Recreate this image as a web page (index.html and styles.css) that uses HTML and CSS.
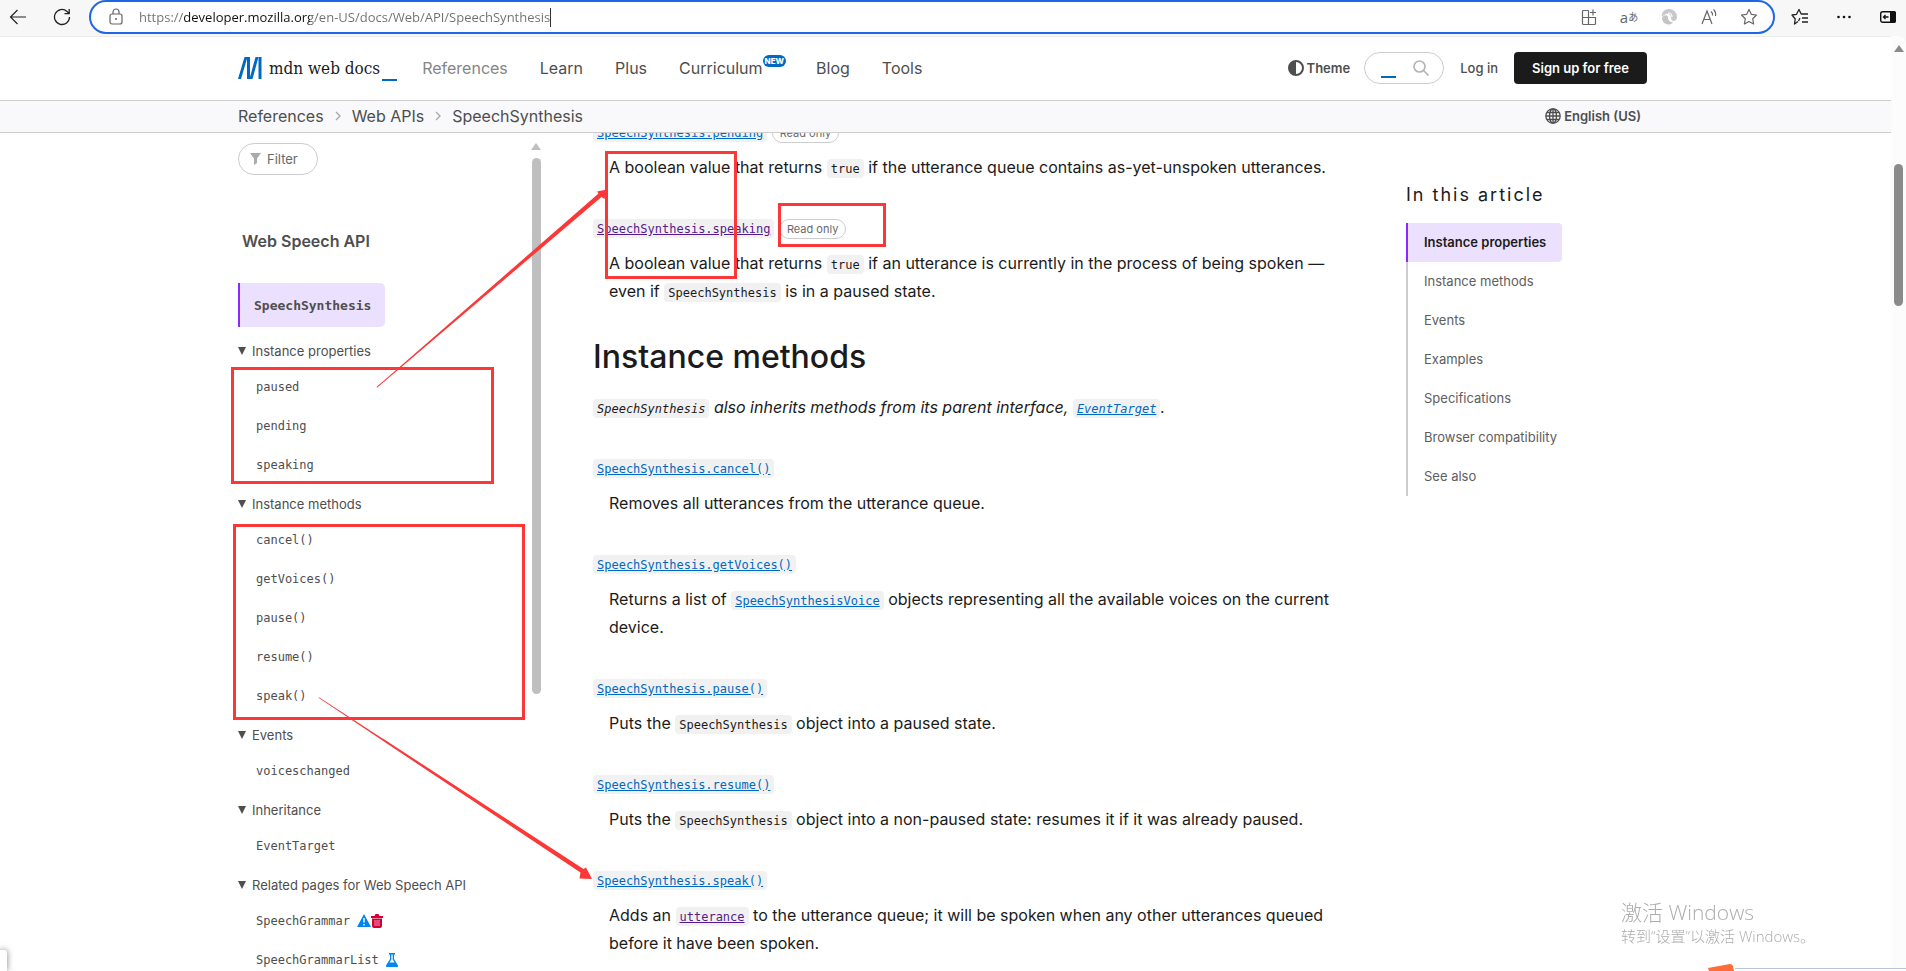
FILE: index.html
```html
<!DOCTYPE html>
<html lang="en-US">
<head>
  <meta charset="UTF-8">
  <meta name="viewport" content="width=device-width, initial-scale=1.0">
  <title>SpeechSynthesis - Web APIs | MDN</title>
  <link rel="stylesheet" href="styles.css">
</head>
<body>

  <!-- Browser toolbar -->
  <div class="toolbar">
    <button class="tool-btn" aria-label="Back">
      <svg width="18" height="18" viewBox="0 0 18 18" fill="none" stroke="#222" stroke-width="1.2"><path d="M17 9H1.500M8.500 2L1.500 9l7 7"/></svg>
    </button>
    <button class="tool-btn" aria-label="Reload">
      <svg width="18" height="18" viewBox="0 0 18 18" fill="none" stroke="#222" stroke-width="1.300"><path d="M16.500 9a7.500 7.500 0 1 1-2.500-5.600L16 5.500M16.200 1v4.700h-4.700"/></svg>
    </button>
    <div class="address">
      <svg width="14" height="18" viewBox="0 0 14 18" fill="none" stroke="#666" stroke-width="1.200"><rect x="1" y="6" width="12" height="10" rx="2"/><path d="M4 6V4a3 3 0 0 1 6 0v2"/><circle cx="7" cy="11" r="1" fill="#666" stroke="none"/></svg>
      <div class="url-field">
        <input class="url" type="text" aria-label="Address" value="https://developer.mozilla.org/en-US/docs/Web/API/SpeechSynthesis">
        <span class="caret"></span>
      </div>
      <div class="address-icons">
        <button class="tool-btn" aria-label="Apps">
          <svg width="18" height="18" viewBox="0 0 18 18" fill="none" stroke="#666" stroke-width="1.200"><path d="M8.500 2.500H3.500a1 1 0 0 0-1 1v12a1 1 0 0 0 1 1h11a1 1 0 0 0 1-1V9.500H2.500M8.500 2.500v14M13 1.500v6M10 4.500h6"/></svg>
        </button>
        <button class="tool-btn translate" aria-label="Translate">a<small>あ</small></button>
        <button class="tool-btn" aria-label="Copilot">
          <svg width="18" height="18" viewBox="0 0 18 18"><path d="M9 1a8 8 0 0 1 8 8c0 5-6 5-6 1 0-3-2-5-5-4-3 1-4 3-4 3C1 5 4 1 9 1z" fill="#c8c8c8"/><path d="M2 10c1-3 5-4 6-1 0 4 2 5 5 5-2 3-5 3-7 2-3-1-4-4-4-6z" fill="#c4c4c4"/><path d="M8 5c3 0 4 2 4 4" fill="none" stroke="#fff" stroke-width="1.200"/></svg>
        </button>
        <button class="tool-btn" aria-label="Read aloud">
          <svg width="18" height="18" viewBox="0 0 18 18" fill="none" stroke="#666" stroke-width="1.200"><path d="M2 16L7 3l5 13M3.700 11.500h6.600M11 3.500a4 4 0 0 1 1.500 4M13.500 1.500a7 7 0 0 1 2 6.500"/></svg>
        </button>
        <button class="tool-btn" aria-label="Add to favorites">
          <svg width="18" height="18" viewBox="0 0 18 18" fill="none" stroke="#666" stroke-width="1.200" stroke-linejoin="round"><path d="M9 1.500l2.300 4.800 5.200.7-3.800 3.700.9 5.300L9 13.500 4.400 16l.9-5.300L1.500 7l5.200-.7z"/></svg>
        </button>
      </div>
    </div>
    <div class="browser-icons">
      <button class="tool-btn" aria-label="Favorites">
        <svg width="18" height="18" viewBox="0 0 18 18" fill="none" stroke="#222" stroke-width="1.300" stroke-linejoin="round"><path d="M7 13.500L3.500 16l.7-5L1 7l4.500-.7L8 1.500l2.200 4.500H17M11 10h6M11 14h6M9 10l-1.500 3"/></svg>
      </button>
      <button class="tool-btn" aria-label="Settings and more">
        <svg width="18" height="18" viewBox="0 0 18 18" fill="#111"><circle cx="3.500" cy="9" r="1.300"/><circle cx="9" cy="9" r="1.300"/><circle cx="14.500" cy="9" r="1.300"/></svg>
      </button>
      <button class="tool-btn" aria-label="Sidebar">
        <svg width="18" height="18" viewBox="0 0 18 18"><rect x="1.700" y="3.700" width="14.600" height="10.600" rx="2" fill="none" stroke="#111" stroke-width="1.400"/><path d="M11 3h4a2 2 0 0 1 2 2v8a2 2 0 0 1-2 2h-4z" fill="#111"/><path d="M9.500 9H4.500M6.500 7l-2 2 2 2" fill="none" stroke="#111" stroke-width="1.300"/></svg>
      </button>
    </div>
  </div>

  <div class="window">
    <div class="page">

      <header class="header">
        <div class="container header-row">
          <a class="logo" href="#" aria-label="MDN homepage">
            <svg width="24" height="22" viewBox="0 0 24 22"><g fill="#0069c2"><path d="M6.500 0h3L3 22H0z"/><path d="M9 0h3v22H9z"/><path d="M17.500 0h3L14.500 22h-3z"/><path d="M20.500 0h3v22h-3z"/></g></svg>
            <span class="logo-text">mdn web docs</span><span class="underscore"></span>
          </a>
          <nav class="nav">
            <a class="muted" href="#">References</a>
            <a href="#">Learn</a>
            <a href="#">Plus</a>
            <a href="#">Curriculum<sup class="new">NEW</sup></a>
            <a href="#">Blog</a>
            <a href="#">Tools</a>
          </nav>
          <div class="actions">
            <button class="link-btn">
              <svg width="16" height="16" viewBox="0 0 16 16"><circle cx="8" cy="8" r="7" fill="none" stroke="#4e4e4e" stroke-width="2"/><path d="M8 1v14A7 7 0 0 1 8 1z" fill="#4e4e4e"/></svg>
              Theme
            </button>
            <form class="search" role="search">
              <span class="underscore"></span>
              <input type="search" aria-label="Search MDN">
              <svg width="16" height="16" viewBox="0 0 16 16" fill="none" stroke="#b3b3b3" stroke-width="1.600"><circle cx="6.500" cy="6.500" r="5.500"/><path d="M10.500 10.500l5 5"/></svg>
            </form>
            <a class="login" href="#">Log in</a>
            <a class="signup" href="#">Sign up for free</a>
          </div>
        </div>
      </header>

      <div class="crumbs-bar">
        <div class="container crumbs-row">
          <nav class="crumbs" aria-label="Breadcrumbs">
            <a href="#">References</a>
            <svg width="6" height="10" viewBox="0 0 6 10"><path d="M1 1l4 4-4 4" fill="none" stroke="#aaa" stroke-width="1.400"/></svg>
            <a href="#">Web APIs</a>
            <svg width="6" height="10" viewBox="0 0 6 10"><path d="M1 1l4 4-4 4" fill="none" stroke="#aaa" stroke-width="1.400"/></svg>
            <a href="#">SpeechSynthesis</a>
          </nav>
          <button class="link-btn language">
            <svg width="16" height="16" viewBox="0 0 16 16" fill="none" stroke="#4e4e4e" stroke-width="1.300"><circle cx="8" cy="8" r="7.200"/><ellipse cx="8" cy="8" rx="3.500" ry="7.200"/><path d="M8 1v14M1 8h14M2 4.500h12M2 11.500h12"/></svg>
            English (US)
          </button>
        </div>
      </div>

      <div class="container columns">
        <aside class="sidebar">
          <div class="sidebar-inner">
            <label class="filter">
              <svg width="11" height="12" viewBox="0 0 11 12"><path d="M0 0h11L7 5.500V10l-3 2V5.500z" fill="#aaa"/></svg>
              <input type="text" placeholder="Filter" aria-label="Filter sidebar">
            </label>
            <a class="sidebar-title" href="#">Web Speech API</a>
            <a class="current" href="#">SpeechSynthesis</a>

            <details open>
              <summary>Instance properties</summary>
              <ul>
                <li><a href="#">paused</a></li>
                <li><a href="#">pending</a></li>
                <li><a href="#">speaking</a></li>
              </ul>
            </details>
            <details open>
              <summary>Instance methods</summary>
              <ul>
                <li><a href="#">cancel()</a></li>
                <li><a href="#">getVoices()</a></li>
                <li><a href="#">pause()</a></li>
                <li><a href="#">resume()</a></li>
                <li><a href="#">speak()</a></li>
              </ul>
            </details>
            <details open>
              <summary>Events</summary>
              <ul>
                <li><a href="#">voiceschanged</a></li>
              </ul>
            </details>
            <details open>
              <summary>Inheritance</summary>
              <ul>
                <li><a href="#">EventTarget</a></li>
              </ul>
            </details>
            <details open>
              <summary>Related pages for Web Speech API</summary>
              <ul>
                <li>
                  <a href="#">SpeechGrammar</a>
                  <svg class="status" width="14" height="13" viewBox="0 0 14 13"><path d="M7 0l7 13H0z" fill="#0085f2"/><path d="M7 4v4.500M7 10v1.500" stroke="#fff" stroke-width="1.400"/></svg>
                  <svg width="12" height="14" viewBox="0 0 12 14"><path d="M0 2h3.500L4.500 0h3l1 2H12v2H0z M1 4.500h10V12a2 2 0 0 1-2 2H3a2 2 0 0 1-2-2z" fill="#d30038"/><path d="M4 6v6M6 6v6M8 6v6" stroke="#fff" stroke-width="0.600"/></svg>
                </li>
                <li>
                  <a href="#">SpeechGrammarList</a>
                  <svg class="status" width="12" height="14" viewBox="0 0 12 14"><path d="M3 0h6v1.500H8V6l4 6.500c.3.800 0 1.500-1 1.500H1c-1 0-1.300-.7-1-1.500L4 6V1.500H3z" fill="#0085f2"/><path d="M5.300 1.500h1.400V6.500L8.500 9.500h-5L5.300 6.500z" fill="#fff"/></svg>
                </li>
              </ul>
            </details>
          </div>
          <div class="side-scroll">
            <span class="arrow-up"></span>
            <span class="thumb"></span>
          </div>
        </aside>

        <main class="article">
          <dl>
            <dt><a href="#"><code>SpeechSynthesis.pending</code></a> <span class="badge">Read only</span></dt>
            <dd>A boolean value that returns <code>true</code> if the utterance queue contains as-yet-unspoken utterances.</dd>
            <dt><a class="visited" href="#"><code>SpeechSynthesis.speaking</code></a> <span class="badge">Read only</span></dt>
            <dd>A boolean value that returns <code>true</code> if an utterance is currently in the process of being spoken — even if <code>SpeechSynthesis</code> is in a paused state.</dd>
          </dl>

          <h2>Instance methods</h2>
          <p><em><code>SpeechSynthesis</code> also inherits methods from its parent interface, <a href="#"><code>EventTarget</code></a>.</em></p>

          <dl>
            <dt><a href="#"><code>SpeechSynthesis.cancel()</code></a></dt>
            <dd>Removes all utterances from the utterance queue.</dd>
            <dt><a href="#"><code>SpeechSynthesis.getVoices()</code></a></dt>
            <dd>Returns a list of <a href="#"><code>SpeechSynthesisVoice</code></a> objects representing all the available voices on the current device.</dd>
            <dt><a href="#"><code>SpeechSynthesis.pause()</code></a></dt>
            <dd>Puts the <code>SpeechSynthesis</code> object into a paused state.</dd>
            <dt><a href="#"><code>SpeechSynthesis.resume()</code></a></dt>
            <dd>Puts the <code>SpeechSynthesis</code> object into a non-paused state: resumes it if it was already paused.</dd>
            <dt><a href="#"><code>SpeechSynthesis.speak()</code></a></dt>
            <dd>Adds an <a class="visited" href="#"><code>utterance</code></a> to the utterance queue; it will be spoken when any other utterances queued before it have been spoken.</dd>
          </dl>
        </main>

        <aside class="toc">
          <h3>In this article</h3>
          <ul>
            <li class="active"><a href="#">Instance properties</a></li>
            <li><a href="#">Instance methods</a></li>
            <li><a href="#">Events</a></li>
            <li><a href="#">Examples</a></li>
            <li><a href="#">Specifications</a></li>
            <li><a href="#">Browser compatibility</a></li>
            <li><a href="#">See also</a></li>
          </ul>
        </aside>
      </div>
    </div>

    <div class="page-scroll">
      <span class="arrow-up"></span>
      <span class="thumb"></span>
    </div>
  </div>

  <!-- Red notes drawn over the page -->
  <svg class="notes" width="1906" height="971" viewBox="0 0 1906 971">
    <g fill="none" stroke="#fc3737" stroke-width="3">
      <rect x="232.500" y="368.500" width="260" height="114"/>
      <rect x="234.500" y="525.500" width="289" height="193"/>
      <rect x="606.500" y="152.500" width="129" height="125"/>
      <rect x="779.500" y="204.500" width="105" height="41"/>
    </g>
    <g fill="#fc3737">
      <path d="M376.500 387L598.500 193.500L597 191.500L607 189.500L604.500 199L601.500 197L377 387.800z"/>
      <path d="M318.500 697.800L580.500 872.500L579.500 878.500L592 879L586 867.500L583.500 869L319 697.200z"/>
    </g>
  </svg>

  <div class="activate">
    <div class="activate-title">激活 Windows</div>
    <div>转到“设置”以激活 Windows。</div>
  </div>
  <div class="corner-left"></div>
  <div class="corner-right">
    <svg width="28" height="7" viewBox="0 0 28 7"><path d="M1 4L23 0q2 0 3 2l1 5H2z" fill="#ff6c37"/></svg>
  </div>

</body>
</html>
```

FILE: styles.css
```css
* { margin: 0; padding: 0; box-sizing: border-box; }
body {
  font-family: Inter, "Liberation Sans", sans-serif;
  font-size: 16px;
  line-height: 28px;
  color: #1b1b1b;
  background: #f7f7f7;
  height: 100vh;
  display: flex;
  flex-direction: column;
  overflow: hidden;
}
a { color: inherit; text-decoration: none; }
ul { list-style: none; }
button, input {
  font: inherit;
  color: inherit;
  border: none;
  background: none;
  outline: none;
}
button { cursor: pointer; }
svg { flex-shrink: 0; }

/* browser toolbar */
.toolbar {
  display: flex;
  align-items: center;
  height: 36px;
  padding: 0 9px 2px;
  flex-shrink: 0;
}
.tool-btn {
  display: flex;
  align-items: center;
  justify-content: center;
  width: 18px;
  height: 18px;
}
.tool-btn + .tool-btn { margin-left: 26px; }
.address {
  flex: 1;
  display: flex;
  align-items: center;
  height: 34px;
  margin: 0 16px 0 18px;
  padding: 0 15px 0 18px;
  background: #fff;
  border: 2px solid #1f66e5;
  border-radius: 17px;
}
.url-field {
  flex: 1;
  display: flex;
  align-items: center;
  margin-left: 16px;
}
.url {
  field-sizing: content;
  font: 13px/20px "Open Sans", "Noto Sans", sans-serif;
  color: #6f6f6f;
  background: linear-gradient(to right, #6f6f6f 45px, #111 45px, #111 171px, #6f6f6f 171px);
  -webkit-background-clip: text;
  background-clip: text;
  -webkit-text-fill-color: transparent;
}
.caret { width: 1px; height: 19px; background: #333; }
.address-icons, .browser-icons { display: flex; }
.address-icons .tool-btn + .tool-btn { margin-left: 22px; }
.translate {
  font: 15px/18px "Open Sans", sans-serif;
  color: #666;
}
.translate small { font: 10px/18px "Noto Sans CJK JP", sans-serif; }

/* page shell */
.window { flex: 1; min-height: 0; display: flex; }
.page {
  flex: 1;
  min-width: 0;
  display: flex;
  flex-direction: column;
  background: #fff;
  border-top: 1px solid #ececec;
}
.page-scroll {
  width: 15px;
  background: #fcfcfc;
  border-radius: 0 8px 0 0;
  display: flex;
  flex-direction: column;
  align-items: center;
  padding-top: 9px;
}
.arrow-up {
  border: 5px solid transparent;
  border-top: none;
  border-bottom: 7px solid #8b8b8b;
}
.thumb { width: 9px; border-radius: 5px; background: #8b8b8b; }
.page-scroll .thumb { margin-top: 112px; height: 142px; }
.container {
  width: 100%;
  max-width: 1441px;
  margin: 0 auto;
  padding: 0 18px 0 13px;
}

/* header */
.header { border-bottom: 1px solid #cdcdcd; flex-shrink: 0; }
.header-row { display: flex; align-items: center; height: 63px; padding-bottom: 2px; }
.logo { display: flex; align-items: center; }
.logo-text {
  font-family: "DejaVu Serif Condensed", "DejaVu Serif", serif;
  font-size: 17px;
  margin: 0 2px 0 7px;
}
.underscore {
  align-self: flex-end;
  width: 15px;
  height: 2px;
  margin-bottom: 1px;
  background: #0069c2;
}
.nav {
  display: flex;
  gap: 32px;
  margin-left: 25px;
  color: #4e4e4e;
}
.nav .muted { color: #858585; }
.new {
  display: inline-block;
  margin-right: -2px;
  padding: 0 2px;
  font-size: 8px;
  line-height: 12px;
  font-weight: 800;
  color: #fff;
  background: #0069c2;
  border-radius: 6px;
  vertical-align: 10px;
}
.actions {
  display: flex;
  align-items: center;
  margin-left: auto;
  font-size: 13px;
  font-weight: 500;
  color: #4e4e4e;
}
.link-btn {
  display: flex;
  align-items: center;
  gap: 3px;
  font-size: 13px;
  font-weight: 600;
  color: #4e4e4e;
}
.search {
  display: flex;
  align-items: center;
  width: 80px;
  height: 32px;
  margin: 0 16px 0 14px;
  padding: 0 14px 0 16px;
  border: 1px solid #cdcdcd;
  border-radius: 16px;
}
.search .underscore { margin-bottom: 5px; }
.search input { flex: 1; min-width: 0; }
.signup {
  margin-left: 16px;
  padding: 2px 18px;
  font-weight: 600;
  color: #fff;
  background: #1b1b1b;
  border-radius: 4px;
}
.header .actions { margin-right: 1px; }

/* breadcrumbs */
.crumbs-bar {
  background: #f9f9fb;
  border-bottom: 1px solid #cdcdcd;
  flex-shrink: 0;
}
.crumbs-row {
  display: flex;
  align-items: center;
  justify-content: space-between;
  height: 31px;
  padding-bottom: 1px;
}
.crumbs { display: flex; align-items: center; gap: 11px; color: #4e4e4e; }
.language { margin-right: 7px; }

/* three columns */
.columns {
  flex: 1;
  min-height: 0;
  display: grid;
  grid-template-columns: 307px 1fr 242px;
  grid-template-rows: 100%;
  gap: 48px;
  overflow: hidden;
}

/* left sidebar */
.sidebar {
  display: flex;
  justify-content: space-between;
  padding: 10px 4px 0 0;
  font-size: 13px;
  color: #4e4e4e;
}
.sidebar-inner {
  display: flex;
  flex-direction: column;
  align-items: flex-start;
}
.filter {
  display: flex;
  align-items: center;
  width: 80px;
  height: 32px;
  flex-shrink: 0;
  padding-left: 11px;
  border: 1px solid #cdcdcd;
  border-radius: 16px;
}
.filter input { width: 50px; margin-left: 6px; line-height: 20px; }
.filter input::placeholder { color: #696969; opacity: 1; }
.sidebar-title {
  margin: 52px 0 28px 4px;
  font-size: 16px;
  font-weight: 600;
}
.current {
  padding: 9px 14px 7px;
  margin-bottom: 8px;
  font: bold 13px/28px "DejaVu Sans Mono", monospace;
  background: #ece0ff;
  border-left: 2px solid #872bff;
  border-radius: 0 5px 5px 0;
}
summary {
  display: flex;
  align-items: center;
  gap: 6px;
  height: 32px;
  cursor: pointer;
}
summary::before {
  content: "";
  border: 4px solid transparent;
  border-top: 8px solid #4e4e4e;
  border-bottom: none;
}
details ul { margin-bottom: 4px; padding-left: 18px; }
details li {
  display: flex;
  align-items: center;
  height: 39px;
  font: 12px/28px "DejaVu Sans Mono", monospace;
}
.status { margin-left: 7px; }
.side-scroll { display: flex; flex-direction: column; align-items: center; }
.side-scroll .arrow-up { border-bottom-color: #bfbfbf; }
.side-scroll .thumb { margin-top: 8px; height: 536px; background: #bfbfbf; }

/* article, scrolled a little under the breadcrumb bar */
.article { margin-top: -16px; }
.article dt { margin-top: 32px; }
.article dl:first-child dt:first-child { margin-top: 0; }
.article dd { margin: 8px 0 0 16px; }
.article h2 {
  margin: 32px 0 16px;
  font-size: 32px;
  line-height: 40px;
  font-weight: 500;
}
.article a { color: #0069c2; text-decoration: underline; }
.article a.visited { color: #551a8b; }
.article code {
  padding: 3px 4px 2px;
  font-family: "DejaVu Sans Mono", monospace;
  font-size: 12px;
  line-height: 12px;
  background: #f2f1f1;
  border-radius: 4px;
}
.badge {
  padding: 2px 7px;
  font-size: 11px;
  line-height: 12px;
  color: #696969;
  border: 1px solid #cdcdcd;
  border-radius: 10px;
}

/* table of contents */
.toc { padding-top: 48px; }
.toc h3 {
  font-size: 18px;
  line-height: 28px;
  font-weight: 400;
  letter-spacing: 2px;
  margin-bottom: 14px;
}
.toc ul { font-size: 13px; color: #5e5e5e; }
.toc li { display: flex; border-left: 2px solid #cdcdcd; }
.toc a {
  padding: 0 16px;
  line-height: 39px;
  border-radius: 0 4px 4px 0;
}
.toc .active { border-color: #872bff; }
.toc .active a { font-weight: 600; color: #1b1b1b; background: #ece0ff; }

/* things lying over the page */
.notes { position: fixed; top: 0; left: 0; pointer-events: none; }
.activate {
  position: fixed;
  right: 80px;
  bottom: 24px;
  width: 205px;
  font: 15px/22px "Open Sans", "Noto Sans CJK SC", sans-serif;
  font-weight: 300;
  white-space: nowrap;
  color: #adadad;
}
.activate-title { font-size: 21px; line-height: 26px; }
.corner-left {
  position: fixed;
  left: 0;
  bottom: 0;
  width: 7px;
  height: 21px;
  background: #fff;
  border-radius: 0 3px 0 0;
  box-shadow: 0 0 6px rgba(0,0,0,0.5);
}
.corner-right {
  position: fixed;
  right: 0;
  bottom: 0;
  display: flex;
  width: 199px;
  height: 7px;
}
.corner-right::after {
  content: "";
  flex: 1;
  margin-top: 4px;
  border-top: 1px solid #b9c6de;
  background: #fff;
}
```
